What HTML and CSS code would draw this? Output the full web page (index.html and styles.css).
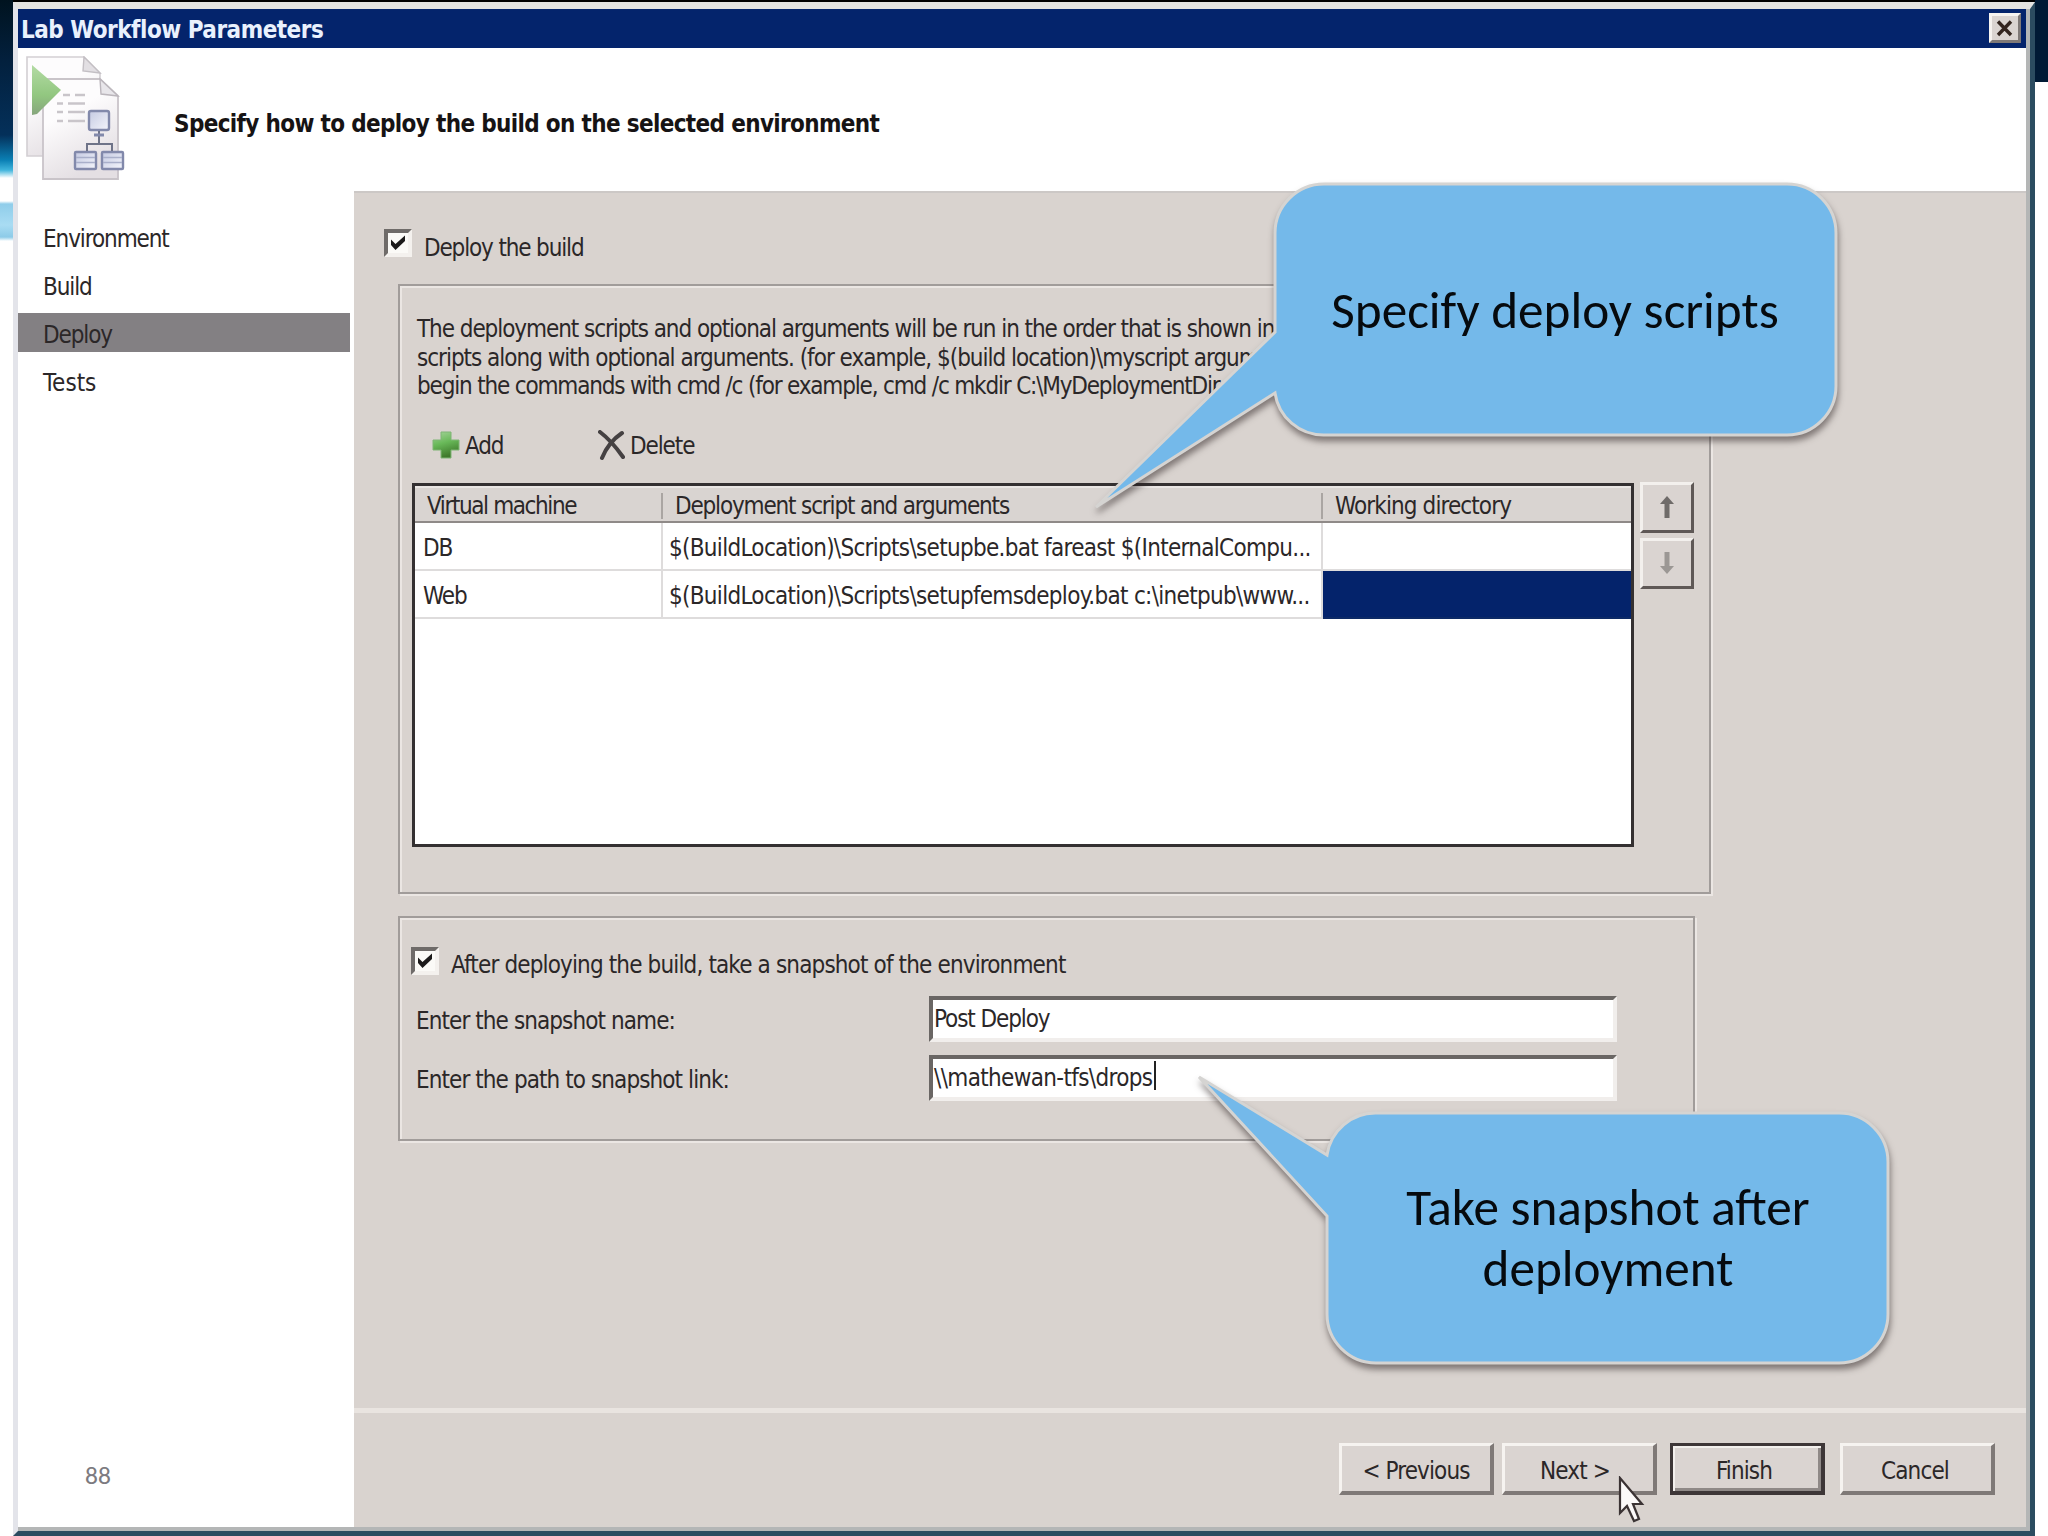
FILE: index.html
```html
<!DOCTYPE html>
<html lang="en">
<head>
    <meta charset="UTF-8">
    <title>Lab Workflow Parameters</title>
    <link rel="stylesheet" href="styles.css">
</head>
<body>
    <div class="slide">
        <div class="edge-left"></div>
        <div class="edge-right"></div>

        <div class="window">
            <div class="titlebar">
                <span>Lab Workflow Parameters</span>
                <button class="close">
                    <svg width="18" height="17" viewBox="0 0 18 17"><path d="M2 1.5L15 15M15 1.5L2 15" stroke="#33251f" stroke-width="3.4"/></svg>
                </button>
            </div>

            <div class="header">
                <svg class="logo" width="100" height="126" viewBox="0 0 100 126">
                    <defs>
                        <linearGradient id="page" x1="0" y1="0" x2="0.4" y2="1">
                            <stop offset="0.4" stop-color="#fdfcfd"/>
                            <stop offset="1" stop-color="#e4dfe3"/>
                        </linearGradient>
                        <linearGradient id="play" x1="0" y1="0" x2="0" y2="1">
                            <stop offset="0" stop-color="#b3dba4"/>
                            <stop offset="0.6" stop-color="#92c780"/>
                            <stop offset="1" stop-color="#86a57c"/>
                        </linearGradient>
                        <linearGradient id="box" x1="0" y1="0" x2="1" y2="1">
                            <stop offset="0" stop-color="#c5cae2"/>
                            <stop offset="1" stop-color="#f4f5fb"/>
                        </linearGradient>
                    </defs>
                    <path d="M1 1H58L74 17V100H1Z" fill="url(#page)" stroke="#d3cfd3" stroke-width="1.6"/>
                    <path d="M58 1L57 15L74 17Z" fill="#e2dfe3" stroke="#c3bfc4" stroke-width="1.4"/>
                    <path d="M17 23H74L92 40V123H17Z" fill="url(#page)" stroke="#c9c4c9" stroke-width="1.8"/>
                    <path d="M74 23L75 38L92 40Z" fill="#e8e6ea" stroke="#bbb6bc" stroke-width="1.4"/>
                    <path d="M6 9L35 34L11 58L6 59Z" fill="url(#play)"/>
                    <g stroke="#c9c5ca" stroke-width="2.4">
                        <path d="M37 39H44M49 39H59M31 47.500H37M42 47.500H59M31 56H37M42 56H59M31 65H37M42 65H59"/>
                    </g>
                    <g fill="url(#box)" stroke="#8289ab" stroke-width="2.4">
                        <rect x="63" y="55" width="20" height="19" rx="2"/>
                        <rect x="49" y="96" width="21" height="17" rx="1"/>
                        <rect x="76" y="96" width="21" height="17" rx="1"/>
                    </g>
                    <path d="M73 75V88M61 95V88H86V95" fill="none" stroke="#6e7388" stroke-width="2"/>
                    <path d="M68 79H78" stroke="#8289ab" stroke-width="3"/>
                    <path d="M50 101.500H69M50 106.500H69M77 101.500H96M77 106.500H96" stroke="#a9afca" stroke-width="1.4"/>
                </svg>
                <h1>Specify how to deploy the build on the selected environment</h1>
            </div>

            <div class="body">
                <ul class="nav">
                    <li>Environment</li>
                    <li>Build</li>
                    <li class="active">Deploy</li>
                    <li class="loose">Tests</li>
                </ul>

                <div class="main">
                    <div class="content">
                        <div class="check-row">
                            <span class="checkbox"><svg width="16" height="16" viewBox="0 0 16 16"><path d="M1 4.500L5.500 9L15 0.500V6L5.500 15L1 10Z" fill="#1c1a1a"/></svg></span>
                            <span>Deploy the build</span>
                        </div>

                        <div class="group scripts">
                            <p class="hint">The deployment scripts and optional arguments will be run in the order that is shown in<br>
                                <span class="hint-2">scripts along with optional arguments. (for example, $(build location)\myscript argum</span><br>
                                <span class="hint-3">begin the commands with cmd /c (for example, cmd /c mkdir C:\MyDeploymentDir</span></p>

                            <div class="toolbar">
                                <div class="tool add">
                                    <svg width="29" height="30" viewBox="0 0 29 30">
                                        <defs>
                                            <linearGradient id="plus" x1="0" y1="0" x2="0.3" y2="1">
                                                <stop offset="0" stop-color="#a5d49a"/>
                                                <stop offset="0.5" stop-color="#68b858"/>
                                                <stop offset="1" stop-color="#3f7a2c"/>
                                            </linearGradient>
                                        </defs>
                                        <path d="M10 2H20V10H28V20H20V28H10V20H2V10H10Z" fill="url(#plus)" stroke="#7fb574" stroke-width="1"/>
                                    </svg>
                                    <span>Add</span>
                                </div>
                                <div class="tool">
                                    <svg width="27" height="30" viewBox="0 0 27 30"><path d="M2 2C10 8 18 17 25 27M24 3C15 9 8 18 4 28" fill="none" stroke="#454142" stroke-width="4" stroke-linecap="round"/></svg>
                                    <span>Delete</span>
                                </div>
                            </div>

                            <div class="grid-row">
                                <div class="grid">
                                    <table>
                                        <colgroup><col class="col-vm"><col class="col-script"><col></colgroup>
                                        <tr>
                                            <th class="tighter">Virtual machine</th>
                                            <th class="tight">Deployment script and arguments</th>
                                            <th>Working directory</th>
                                        </tr>
                                        <tr>
                                            <td>DB</td>
                                            <td class="script">$(BuildLocation)\Scripts\setupbe.bat fareast $(InternalCompu...</td>
                                            <td></td>
                                        </tr>
                                        <tr>
                                            <td>Web</td>
                                            <td class="script">$(BuildLocation)\Scripts\setupfemsdeploy.bat c:\inetpub\www...</td>
                                            <td class="selected"></td>
                                        </tr>
                                    </table>
                                </div>
                                <div class="order">
                                    <button><svg width="16" height="24" viewBox="0 0 16 24"><path d="M8 1L15 9H10.500V23H5.500V9H1Z" fill="#6f6b69"/></svg></button>
                                    <button><svg width="16" height="24" viewBox="0 0 16 24"><path d="M8 23L15 15H10.500V1H5.500V15H1Z" fill="#9b9794"/></svg></button>
                                </div>
                            </div>
                        </div>

                        <div class="group snapshot">
                            <div class="check-row">
                                <span class="checkbox"><svg width="16" height="16" viewBox="0 0 16 16"><path d="M1 4.500L5.500 9L15 0.500V6L5.500 15L1 10Z" fill="#1c1a1a"/></svg></span>
                                <span>After deploying the build, take a snapshot of the environment</span>
                            </div>
                            <div class="field-row">
                                <label>Enter the snapshot name:</label>
                                <div class="field">Post Deploy</div>
                            </div>
                            <div class="field-row">
                                <label>Enter the path to snapshot link:</label>
                                <div class="field path">\\mathewan-tfs\drops<span class="caret"></span></div>
                            </div>
                        </div>
                    </div>

                    <div class="footer">
                        <button>&lt; Previous</button>
                        <button class="next">Next &gt;</button>
                        <button class="finish">Finish</button>
                        <button class="cancel">Cancel</button>
                    </div>
                </div>
            </div>
        </div>

        <!-- callouts over the window -->
        <svg class="bubbles" width="2048" height="1536" viewBox="0 0 2048 1536">
            <path d="M1324 184H1787A49 49 0 0 1 1836 233V386A49 49 0 0 1 1787 435H1324A49 49 0 0 1 1275 393L1096 507L1275 332V233A49 49 0 0 1 1324 184Z"/>
            <path d="M1376 1113H1839A49 49 0 0 1 1888 1162V1314A49 49 0 0 1 1839 1363H1376A49 49 0 0 1 1327 1314V1216L1199 1077L1327 1155A49 49 0 0 1 1376 1113Z"/>
        </svg>
        <div class="callout callout-scripts">Specify deploy scripts</div>
        <div class="callout callout-snapshot">Take snapshot after deployment</div>

        <div class="page-number">88</div>

        <svg class="cursor" width="28" height="48" viewBox="0 0 28 48">
            <path d="M2 2V37L9 30L16 45L21 43L15 28H24Z" fill="#fbf9f9" stroke="#3b3334" stroke-width="2.2"/>
        </svg>
    </div>
</body>
</html>
```
FILE: styles.css
```css
* {
    box-sizing: border-box;
}
body {
    margin: 0;
    font-family: "DejaVu Sans Condensed", "DejaVu Sans", sans-serif;
    font-size: 24px;
    letter-spacing: -1.1px;
    color: #2b2728;
}
button {
    font: inherit;
    letter-spacing: inherit;
    color: inherit;
    padding: 0;
    background-color: #dad4d1;
    border: 3px solid;
    border-color: #f6f3f0 #7f7977 #7f7977 #f6f3f0;
}
svg {
    display: block;
}
.slide {
    position: relative;
    width: 2048px;
    height: 1536px;
    padding: 2px 0 0 13px;
    overflow: hidden;
    background: linear-gradient(#000 3px, #fff 3px);
}
.edge-left {
    position: absolute;
    left: 0;
    top: 0;
    width: 13px;
    height: 300px;
    background: linear-gradient(#00131f 0, #03203d 60px, #04305a 135px, #0a7fb4 160px, #3fb4dc 170px, #fff 178px, #fff 201px, #8fcdea 204px, #a9dcf3 225px, #8dcbe8 237px, #fff 241px);
}
.edge-right {
    position: absolute;
    right: 0;
    top: 0;
    width: 13px;
    height: 82px;
    background-color: #001a35;
}

/* dialog window */
.window {
    position: relative;
    display: flex;
    flex-direction: column;
    width: 2022px;
    height: 1534px;
    background-color: #fff;
    border: 5px solid #2b4c60;
    border-left-color: #e3e4ea;
    border-top: 7px solid #e4e3e1;
    box-shadow: inset -4px -4px 0 #b4b6b6;
    padding: 0 4px 4px 0;
}
.titlebar {
    display: flex;
    justify-content: space-between;
    flex: none;
    height: 39px;
    padding: 4px 5px 0 3px;
    background-color: #04246c;
    color: #e9f1fd;
    font-weight: bold;
    line-height: 35px;
    letter-spacing: -0.5px;
}
.close {
    display: flex;
    align-items: center;
    justify-content: center;
    width: 32px;
    height: 30px;
}
.header {
    display: flex;
    flex: none;
    height: 143px;
    padding: 8px 0 0 8px;
}
h1 {
    margin: 51px 0 0 48px;
    font-size: 24px;
    line-height: 34px;
    letter-spacing: -0.66px;
    color: #161314;
}
.body {
    display: flex;
    flex: 1;
}
.nav {
    width: 336px;
    margin: 0;
    padding: 26px 4px 0 0;
    list-style: none;
}
.nav li {
    height: 39px;
    margin-bottom: 9px;
    padding-left: 25px;
    line-height: 44px;
}
.nav .active {
    background-color: #838083;
}
.nav .loose {
    letter-spacing: 0;
}
.main {
    display: flex;
    flex-direction: column;
    flex: 1;
    background-color: #d9d3cf;
    border-top: 2px solid #ccc8c6;
}
.content {
    height: 1215px;
    padding: 36px 0 0 30px;
}

.check-row {
    display: flex;
    height: 29px;
    line-height: 38px;
    letter-spacing: -1.15px;
}
.checkbox {
    display: flex;
    align-items: center;
    justify-content: center;
    width: 28px;
    height: 28px;
    margin-right: 12px;
    background-color: #fbfaf7;
    border: 4px solid;
    border-color: #6f6b69 #f4f1ee #f4f1ee #6f6b69;
}
.group {
    margin-left: 14px;
    border: 2px solid #a19c9a;
    box-shadow: 2px 2px 0 #ebe6e3, inset 2px 2px 0 #ebe6e3;
}
.scripts {
    width: 1313px;
    height: 610px;
    margin-top: 26px;
    padding: 29px 0 0 12px;
}
.hint {
    margin: 0 0 0 5px;
    line-height: 28.5px;
    white-space: nowrap;
    letter-spacing: -1.07px;
}
.hint-2 {
    letter-spacing: -1.02px;
}
.hint-3 {
    letter-spacing: -1.18px;
}
.toolbar {
    display: flex;
    height: 30px;
    margin: 29px 0 23px 19px;
}
.tool {
    display: flex;
    line-height: 32px;
}
.tool span {
    margin-left: 5px;
}
.add {
    width: 167px;
}

/* deployment grid */
.grid-row {
    display: flex;
    gap: 6px;
}
.grid {
    width: 1222px;
    height: 364px;
    background-color: #fff;
    border: 3px solid #343031;
}
table {
    width: 100%;
    table-layout: fixed;
    border-collapse: separate;
    border-spacing: 0;
}
.col-vm {
    width: 248px;
}
.col-script {
    width: 660px;
}
th {
    height: 37px;
    padding: 3px 0 0 12px;
    line-height: 30px;
    text-align: left;
    font-weight: normal;
    letter-spacing: -0.9px;
    background: linear-gradient(#aaa5a2, #aaa5a2) right 5px / 2px 26px no-repeat #d9d4d1;
    border-top: 2px solid #eae6e4;
    border-bottom: 2px solid #8f8a88;
}
th:last-child {
    background: #d9d4d1;
}
.tight {
    letter-spacing: -1.17px;
}
.tighter {
    letter-spacing: -1.4px;
}
td {
    height: 48px;
    padding: 4px 0 0 8px;
    border-right: 2px solid #dedcdc;
    border-bottom: 2px solid #dedcdc;
    white-space: nowrap;
}
td:last-child {
    border-right: 0;
}
.script {
    letter-spacing: -0.7px;
    padding-left: 6px;
}
.selected {
    background-color: #04236b;
    border-bottom-color: #0d2a66;
}
.order {
    display: flex;
    flex-direction: column;
    gap: 5px;
    margin-top: -1px;
}
.order button {
    display: flex;
    align-items: center;
    justify-content: center;
    width: 54px;
    height: 51px;
    border-color: #f3f0ed #5f5856 #5f5856 #f3f0ed;
}

/* snapshot options */
.snapshot {
    width: 1297px;
    height: 225px;
    margin-top: 22px;
    padding: 29px 0 0 11px;
}
.snapshot .check-row {
    margin-bottom: 20px;
    line-height: 36px;
    letter-spacing: -0.86px;
}
.field-row {
    display: flex;
    height: 46px;
    margin-bottom: 13px;
}
.field-row label {
    width: 518px;
    padding-left: 5px;
    line-height: 50px;
    letter-spacing: -0.92px;
}
.field {
    display: flex;
    width: 688px;
    height: 46px;
    padding-left: 1px;
    line-height: 38px;
    background-color: #fff;
    border: 4px solid;
    border-color: #6a6664 #f1eeec #f1eeec #6a6664;
}
.path {
    letter-spacing: -0.65px;
}
.caret {
    width: 2px;
    height: 29px;
    margin: 2px 0 0 2px;
    background-color: #222;
}

.footer {
    display: flex;
    justify-content: flex-end;
    flex: 1;
    padding: 30px 31px 0 0;
    border-top: 5px solid #e9e4e0;
}
.footer button {
    width: 155px;
    height: 52px;
    padding-top: 4px;
    border-width: 3px 4px 4px 3px;
    letter-spacing: -0.9px;
}
.footer .next {
    margin-left: 8px;
    padding-right: 8px;
}
.footer .finish {
    margin-left: 13px;
    padding-right: 6px;
    border-color: #3d3637;
    box-shadow: inset 2px 2px 0 #f3f0ed, inset -3px -3px 0 #8f8987;
}
.footer .cancel {
    margin-left: 15px;
    padding-right: 4px;
}

.bubbles {
    position: absolute;
    left: 0;
    top: 0;
    filter: drop-shadow(1px 5px 3px rgba(40, 30, 30, 0.5));
}
.bubbles path {
    fill: #74b9ea;
    stroke: #d5d4d2;
    stroke-width: 3px;
}
.callout {
    position: absolute;
    display: flex;
    align-items: center;
    justify-content: center;
    text-align: center;
    width: 562px;
    height: 252px;
    padding: 0 70px;
    font-family: Carlito, Lato, sans-serif;
    font-size: 51.2px;
    line-height: 61px;
    letter-spacing: 0;
    color: #060a0e;
}
.callout-scripts {
    left: 1274px;
    top: 184px;
    padding: 0 20px;
}
.callout-snapshot {
    left: 1327px;
    top: 1112px;
}
.page-number {
    position: absolute;
    left: 85px;
    top: 1460px;
    font-family: Carlito, Lato, sans-serif;
    font-size: 25.5px;
    line-height: 32px;
    letter-spacing: 0;
    color: #7c7a80;
}
.cursor {
    position: absolute;
    left: 1618px;
    top: 1476px;
}
```
